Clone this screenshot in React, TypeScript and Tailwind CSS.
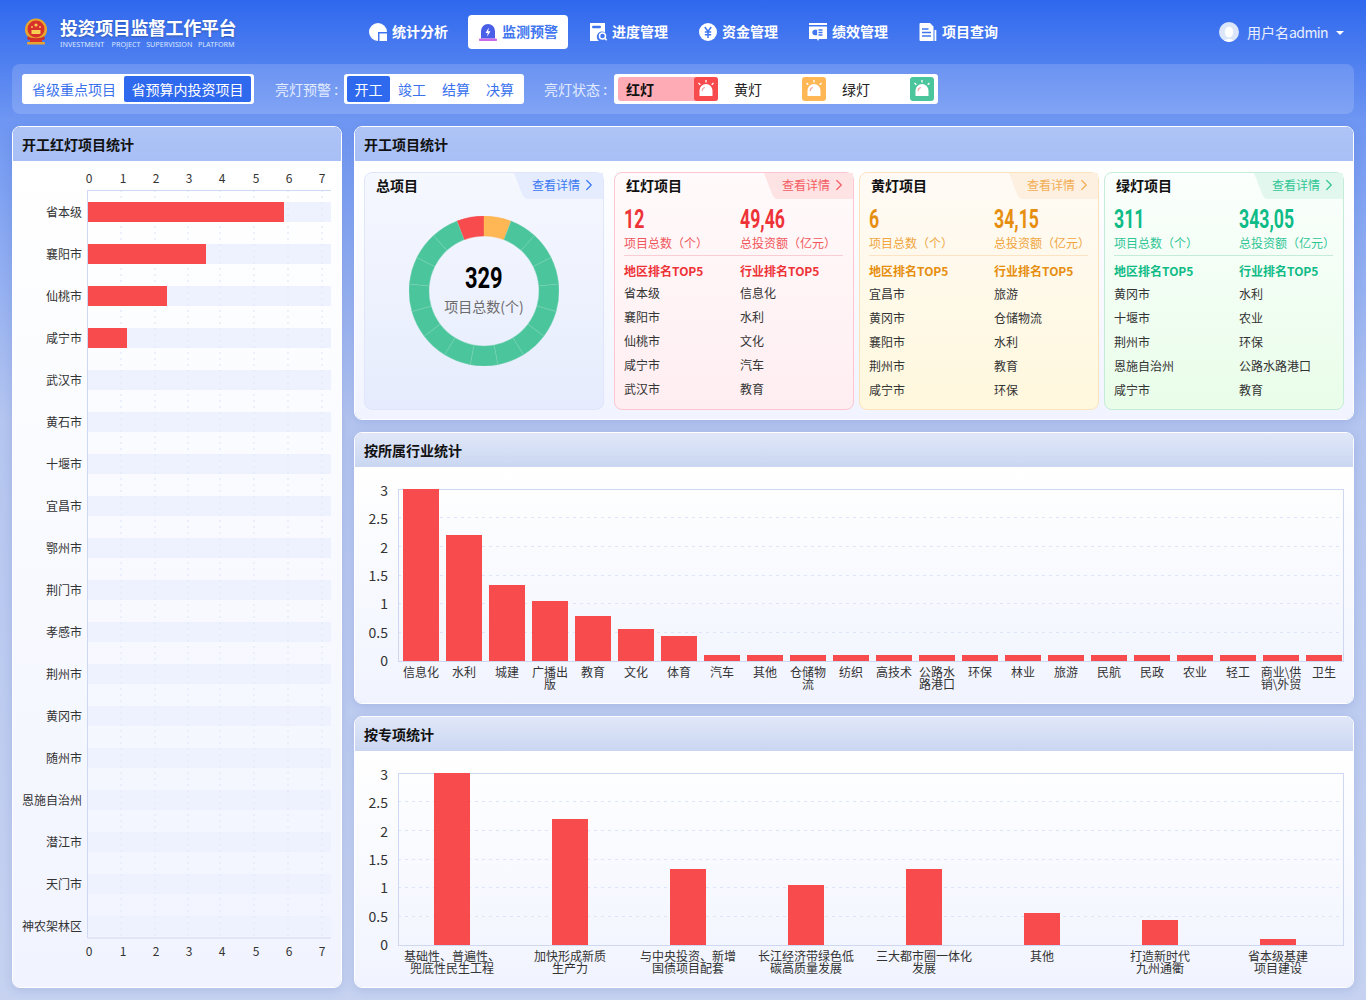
import { ChevronRight } from 'lucide-react';

const cjk = "font-['Noto_Sans_CJK_SC','Noto_Sans',sans-serif]";

const regions = [
  { name: '省本级', value: 197 },
  { name: '襄阳市', value: 119 },
  { name: '仙桃市', value: 80 },
  { name: '咸宁市', value: 40 },
  { name: '武汉市', value: 0 },
  { name: '黄石市', value: 0 },
  { name: '十堰市', value: 0 },
  { name: '宜昌市', value: 0 },
  { name: '鄂州市', value: 0 },
  { name: '荆门市', value: 0 },
  { name: '孝感市', value: 0 },
  { name: '荆州市', value: 0 },
  { name: '黄冈市', value: 0 },
  { name: '随州市', value: 0 },
  { name: '恩施自治州', value: 0 },
  { name: '潜江市', value: 0 },
  { name: '天门市', value: 0 },
  { name: '神农架林区', value: 0 },
];

const industries = [
  { top: 489, label: ['信息化'] },
  { top: 535, label: ['水利'] },
  { top: 585, label: ['城建'] },
  { top: 601, label: ['广播出', '版'] },
  { top: 616, label: ['教育'] },
  { top: 629, label: ['文化'] },
  { top: 636, label: ['体育'] },
  { top: 655, label: ['汽车'] },
  { top: 655, label: ['其他'] },
  { top: 655, label: ['仓储物', '流'] },
  { top: 655, label: ['纺织'] },
  { top: 655, label: ['高技术'] },
  { top: 655, label: ['公路水', '路港口'] },
  { top: 655, label: ['环保'] },
  { top: 655, label: ['林业'] },
  { top: 655, label: ['旅游'] },
  { top: 655, label: ['民航'] },
  { top: 655, label: ['民政'] },
  { top: 655, label: ['农业'] },
  { top: 655, label: ['轻工'] },
  { top: 655, label: ['商业\\供', '销\\外贸'] },
  { top: 655, label: ['卫生'] },
];

const specials = [
  { top: 773, label: ['基础性、普遍性、', '兜底性民生工程'] },
  { top: 819, label: ['加快形成新质', '生产力'] },
  { top: 869, label: ['与中央投资、新增', '国债项目配套'] },
  { top: 885, label: ['长江经济带绿色低', '碳高质量发展'] },
  { top: 869, label: ['三大都市圈一体化', '发展'] },
  { top: 913, label: ['其他'] },
  { top: 920, label: ['打造新时代', '九州通衢'] },
  { top: 939, label: ['省本级基建', '项目建设'] },
];

const ticks = ['3', '2.5', '2', '1.5', '1', '0.5', '0'];

function AlarmIcon({ color }: { color: string }) {
  return (
    <span className={`flex h-6 w-6 items-center justify-center rounded-[3px] ${color}`}>
      <svg width="20" height="20" viewBox="0 0 20 20" fill="none">
        <path d="M3.5 17V11.5a6.5 6.5 0 0 1 13 0V17z" fill="#fff" />
        <path d="M6.2 12a3.8 3.8 0 0 1 2.6-3.6" stroke="#f3a6a6" strokeWidth="1.2" />
        <path d="M10 1v2.5M2.5 4l1.8 1.8M17.5 4l-1.8 1.8" stroke="#fff" strokeWidth="1.3" />
      </svg>
    </span>
  );
}

function Emblem() {
  return (
    <svg width="28" height="30" viewBox="0 0 28 30">
      <circle cx="14" cy="12.5" r="11" fill="#e8a52d" />
      <circle cx="14" cy="12" r="8.5" fill="#d8302b" />
      <path d="M6 19c2 3 14 3 16 0l1 3c-3 2-15 2-18 0z" fill="#c6342a" />
      <rect x="8" y="22" width="12" height="5" rx="1" fill="#d8302b" />
      <rect x="5" y="25" width="18" height="2.5" rx="1" fill="#e8a52d" />
      <circle cx="14" cy="8" r="1.6" fill="#f7d154" />
      <circle cx="10" cy="10" r="0.9" fill="#f7d154" />
      <circle cx="18" cy="10" r="0.9" fill="#f7d154" />
      <rect x="9.5" y="13" width="9" height="4" fill="#f7d154" />
    </svg>
  );
}

const navItems = [
  {
    name: '统计分析',
    icon: (
      <svg width="20" height="20" viewBox="0 0 20 20" fill="#fff">
        <path d="M10 1A9 9 0 0 1 19 10H10V19A9 9 0 0 1 10 1Z" />
        <rect x="11.5" y="11.5" width="7.5" height="7.5" />
      </svg>
    ),
  },
  {
    name: '监测预警',
    active: true,
    icon: (
      <svg width="20" height="20" viewBox="0 0 20 20">
        <path d="M3 16.5V9a7 7 0 0 1 14 0v7.500z" fill="#4a5fe8" />
        <rect x="1" y="16.500" width="18" height="2.500" rx="0.800" fill="#c66ae8" />
        <path d="M10.800 5.500 7.500 11h2.200l-.6 3.500 3.400-5.300h-2.300z" fill="#fff" />
      </svg>
    ),
  },
  {
    name: '进度管理',
    icon: (
      <svg width="20" height="20" viewBox="0 0 20 20">
        <path d="M2 1h15v9.500a5 5 0 0 0-6 8.500H2z" fill="#fff" />
        <rect x="4" y="3.800" width="9" height="2.400" rx="1.200" fill="#3f76ef" />
        <circle cx="14.500" cy="14" r="3" fill="none" stroke="#fff" strokeWidth="1.500" />
        <path d="m16.700 16.200 2 2" stroke="#fff" strokeWidth="1.500" />
      </svg>
    ),
  },
  {
    name: '资金管理',
    icon: (
      <svg width="20" height="20" viewBox="0 0 20 20">
        <circle cx="10" cy="10" r="9" fill="#fff" />
        <path d="m6.800 5 3.200 4.500L13.200 5M6.800 10h6.400M6.800 12.800h6.400M10 9.500V16" stroke="#3f76ef" strokeWidth="1.500" fill="none" />
      </svg>
    ),
  },
  {
    name: '绩效管理',
    icon: (
      <svg width="20" height="20" viewBox="0 0 20 20">
        <rect x="1" y="1" width="18" height="2" fill="#fff" />
        <path d="M1 4.500h18v12.500h-8l-1 2-1-2H1z" fill="#fff" />
        <path d="M5 10.500a2 2 0 0 1 2-2h1.500v4H7a2 2 0 0 1-2-2zM10.500 8h4M10.500 10.500h4M10.500 13h4" stroke="#3f76ef" strokeWidth="1.300" fill="#3f76ef" />
      </svg>
    ),
  },
  {
    name: '项目查询',
    icon: (
      <svg width="20" height="20" viewBox="0 0 20 20">
        <path d="M1.500 2a1 1 0 0 1 1-1h9.500l3.500 3.500V19H2.500a1 1 0 0 1-1-1z" fill="#fff" />
        <rect x="16.500" y="8" width="1.800" height="11" fill="#fff" />
        <path d="M4 7h6.500M4 10.500h9M4 14h9" stroke="#3f76ef" strokeWidth="1.500" />
      </svg>
    ),
  },
];

function Header() {
  return (
    <header className="flex h-16 items-center">
      <div className="flex w-[358px] items-center pl-[22px]">
        <Emblem />
        <div className="ml-[10px]">
          <div className="text-[18px] leading-[24px] font-bold tracking-[-0.4px] text-white [text-shadow:0_1px_2px_rgba(0,0,0,0.25)]">
            投资项目监督工作平台
          </div>
          <div className="font-['Noto_Sans',sans-serif] text-[7.2px] leading-[10px] whitespace-pre text-[#dbe6ff]">
            INVESTMENT    PROJECT   SUPERVISION   PLATFORM
          </div>
        </div>
      </div>
      <nav className="flex gap-[10px]">
        {navItems.map((item) => (
          <div
            key={item.name}
            className={`flex h-[34px] w-[100px] items-center gap-1 rounded px-[10px] text-[14px] font-bold ${
              item.active ? 'bg-white text-[#3f76ef]' : 'text-white'
            }`}
          >
            {item.icon}
            <span className="pb-[2px] whitespace-nowrap">{item.name}</span>
          </div>
        ))}
      </nav>
      <div className="ml-auto flex items-center pr-[22px] text-[14px] text-[#eaf0ff]">
        <span className="flex h-5 w-5 items-end justify-center overflow-hidden rounded-full bg-[#dbe6fb]">
          <svg width="14" height="18" viewBox="0 0 14 18" fill="#fff">
            <ellipse cx="7" cy="8" rx="4.200" ry="5.500" />
            <path d="M1 18c1-4 11-4 12 0z" />
          </svg>
        </span>
        <span className="ml-2 leading-5">
          用户名<span className="tracking-[-0.6px]">admin</span>
        </span>
        <span className="mt-[2px] ml-2 h-0 w-0 border-x-4 border-t-4 border-x-transparent border-t-white" />
      </div>
    </header>
  );
}

function FilterBar() {
  return (
    <div className="mx-3 flex h-[50px] items-center rounded-lg bg-white/15 pl-[10px] text-[14px] leading-5">
      <div className="flex h-[30px] w-[232px] items-center rounded-[3px] bg-white p-[2px] text-[#3a72ee]">
        <span className="px-2">省级重点项目</span>
        <span className="flex h-[26px] w-[127px] items-center justify-center rounded-[2px] bg-[#2f69ee] text-white">
          省预算内投资项目
        </span>
      </div>
      <span className="ml-[21px] w-[69px] whitespace-nowrap text-[#e3ebff]">亮灯预警 :</span>
      <div className="flex h-[30px] w-[180px] items-center rounded-[3px] bg-white p-[2px] pl-[3px] text-[#3a72ee]">
        <span className="flex h-[26px] w-[43px] items-center justify-center rounded-[2px] bg-[#2f69ee] text-white">开工</span>
        <span className="ml-[8px]">竣工</span>
        <span className="ml-[16px]">结算</span>
        <span className="ml-[16px]">决算</span>
      </div>
      <span className="ml-[20px] w-[70px] whitespace-nowrap text-[#e3ebff]">亮灯状态 :</span>
      <div className="flex h-[30px] items-center gap-2 rounded-[3px] bg-white px-1 text-[#222]">
        <div className="flex h-6 w-[100px] items-center justify-between rounded-[3px] bg-[#ffabb6] pl-2 font-bold text-[#111]">
          红灯
          <AlarmIcon color="bg-[#f74b4d]" />
        </div>
        <div className="flex h-6 w-[100px] items-center justify-between pl-2">
          黄灯
          <AlarmIcon color="bg-[#ffb655]" />
        </div>
        <div className="flex h-6 w-[100px] items-center justify-between pl-2">
          绿灯
          <AlarmIcon color="bg-[#4bc59b]" />
        </div>
      </div>
    </div>
  );
}

function Panel({ title, headClass, children }: { title: string; headClass: string; children: React.ReactNode }) {
  return (
    <section className="flex h-full flex-col overflow-hidden rounded-lg border border-white shadow-[0_2px_10px_rgba(60,90,180,0.18)]">
      <h2 className={`flex h-[34px] shrink-0 items-center bg-gradient-to-b px-[9px] text-[14px] leading-5 font-bold text-[#111] ${headClass}`}>
        {title}
      </h2>
      <div className="min-h-0 flex-1 bg-gradient-to-b from-white to-[#f1f4ff]">{children}</div>
    </section>
  );
}

function RegionChart() {
  const xs = [89, 123, 156, 189, 222, 256, 289, 322];
  const grid = [121, 155, 188, 220, 254, 288, 322];
  return (
    <svg width="328" height="826" viewBox="13 161 328 826" className="block">
      {regions.map((r, i) => (
        <rect key={r.name} x="87" y={202 + i * 42} width="244" height="20" fill="#eef2fe" />
      ))}
      {grid.map((x) => (
        <line key={x} x1={x} x2={x} y1="190" y2="938" stroke="#e6ebfa" strokeWidth="1.500" strokeDasharray="2 4" />
      ))}
      {regions.map((r, i) => (
        <g key={r.name}>
          {r.value > 0 && <rect x="87" y={202 + i * 42} width={r.value} height="20" fill="#f74b4d" />}
          <text x="82" y={216.500 + i * 42} textAnchor="end" className="fill-[#333] text-[12px]">
            {r.name}
          </text>
        </g>
      ))}
      <path d="M331 190.500H87.500V938H331" fill="none" stroke="#ced8f2" />
      {xs.map((x, i) => (
        <g key={x}>
          <text x={x} y="183" textAnchor="middle" className="fill-[#333] text-[12px]">{i}</text>
          <text x={x} y="956" textAnchor="middle" className="fill-[#333] text-[12px]">{i}</text>
        </g>
      ))}
    </svg>
  );
}

function BarChart({
  items,
  top,
  firstX,
  step,
}: {
  items: { top: number; label: string[] }[];
  top: number;
  firstX: number;
  step: number;
}) {
  const bottom = top + 172;
  return (
    <svg width="998" height="236" viewBox={`355 ${top - 22} 998 236`} className="block">
      {ticks.map((t, i) => {
        const y = top + Math.floor((i * 172) / 6);
        return (
          <g key={t}>
            {i > 0 && i < 6 && <line x1="398" x2="1344" y1={y + 0.500} y2={y + 0.500} stroke="#dde5f8" strokeDasharray="3 4" />}
            <text x="388" y={top + 7 + i * 28.33} textAnchor="end" className="fill-[#333] text-[14px]">{t}</text>
          </g>
        );
      })}
      <rect x="398.500" y={top + 0.500} width="945" height="172" fill="none" stroke="#ced8f2" />
      {items.map((item, i) => {
        const x = firstX + i * step;
        return (
          <g key={item.label.join('')}>
            <rect x={x} y={item.top} width="36" height={bottom - item.top} fill="#f74b4d" />
            {item.label.map((line, j) => (
              <text key={line} x={x + 18} y={bottom + 16 + j * 12} textAnchor="middle" className="fill-[#333] text-[12px]">
                {line}
              </text>
            ))}
          </g>
        );
      })}
    </svg>
  );
}

function Donut() {
  const n = 17;
  const cx = 75;
  const cy = 75;
  const segs = Array.from({ length: n }, (_, i) => {
    const a0 = ((i - 1) * 2 * Math.PI) / n;
    const a1 = (i * 2 * Math.PI) / n;
    const p = (r: number, a: number) => `${cx + r * Math.sin(a)} ${cy - r * Math.cos(a)}`;
    const d = `M${p(75, a0)}A75 75 0 0 1 ${p(75, a1)}L${p(55, a1)}A55 55 0 0 0 ${p(55, a0)}Z`;
    const fill = i === 0 ? '#f74b4d' : i === 1 ? '#ffb655' : '#4bc59b';
    return <path key={i} d={d} fill={fill} stroke={i > 1 ? '#7fd4b5' : fill} strokeWidth="0.400" />;
  });
  return (
    <div className="relative mx-auto mt-[21px] h-[150px] w-[150px]">
      <svg width="150" height="150" viewBox="0 0 150 150">{segs}</svg>
      <div className="absolute inset-0 flex flex-col items-center pt-[47px]">
        <span className="inline-block scale-x-[.73] font-['Roboto',sans-serif] text-[30px] leading-[30px] font-bold text-black">329</span>
        <span className="mt-[3px] text-[14px] leading-5 text-[#6b6b6b]">项目总数(个)</span>
      </div>
    </div>
  );
}

function CardTab({ tabClass, linkClass }: { tabClass: string; linkClass: string }) {
  return (
    <div
      className={`absolute top-0 right-0 flex h-[26px] w-[89px] items-center justify-end pr-[5px] pb-[2px] text-[12px] [clip-path:path('M0_0H89V26H14Q10_26_8_21Z')] ${tabClass} ${linkClass}`}
    >
      查看详情
      <ChevronRight size={18} strokeWidth={1.600} />
    </div>
  );
}

type Theme = {
  card: string;
  tab: string;
  link: string;
  value: string;
  label: string;
  divider: string;
};

function LightCard({
  title,
  theme,
  count,
  amount,
  regionsTop,
  sectorsTop,
  columns,
  rowsTop,
}: {
  title: string;
  theme: Theme;
  count: string;
  amount: string;
  regionsTop: string[];
  sectorsTop: string[];
  columns: string;
  rowsTop: string;
}) {
  return (
    <div className={`relative h-[238px] w-[240px] shrink-0 rounded-lg border bg-gradient-to-b pr-[10px] pl-[9px] ${theme.card}`}>
      <CardTab tabClass={theme.tab} linkClass={theme.link} />
      <div className="mt-[2px] pl-[2px] text-[14px] leading-5 font-bold text-[#111]">{title}</div>
      <div className={`mt-[10px] grid ${columns} border-b pb-[3px] ${theme.divider}`}>
        <div>
          <div className={`inline-block origin-left scale-x-[.68] font-['Roboto',sans-serif] text-[26px] leading-[28px] font-bold whitespace-nowrap ${theme.value}`}>{count}</div>
          <div className={`mt-[1px] text-[12px] leading-[18px] whitespace-nowrap ${theme.label}`}>项目总数（个）</div>
        </div>
        <div>
          <div className={`inline-block origin-left scale-x-[.68] font-['Roboto',sans-serif] text-[26px] leading-[28px] font-bold whitespace-nowrap ${theme.value}`}>{amount}</div>
          <div className={`mt-[1px] text-[12px] leading-[18px] whitespace-nowrap ${theme.label}`}>总投资额（亿元）</div>
        </div>
      </div>
      <div className={`mt-[6px] grid ${columns} text-[12px] leading-[18px] font-bold ${theme.value}`}>
        <span>地区排名TOP5</span>
        <span>行业排名TOP5</span>
      </div>
      <div className={`${rowsTop} grid ${columns} text-[12px] leading-[24px] text-[#333]`}>
        {regionsTop.map((r, i) => (
          <div key={r} className="contents">
            <span>{r}</span>
            <span>{sectorsTop[i]}</span>
          </div>
        ))}
      </div>
    </div>
  );
}

const blueHead = 'from-[#aec4f7] to-[#a8bff5]';
const paleHead = 'from-[#e0e7f8] to-[#cad6f1]';

export default function App() {
  return (
    <div className={`h-[1000px] overflow-hidden bg-[linear-gradient(180deg,#2f68ee_0%,#6e96f2_12%,#b4c5ef_42%,#c6d2f0_100%)] ${cjk}`}>
      <Header />
      <FilterBar />
      <main className="mx-3 mt-3 flex gap-3">
        <div className="h-[862px] w-[330px] shrink-0">
          <Panel title="开工红灯项目统计" headClass={blueHead}>
            <RegionChart />
          </Panel>
        </div>
        <div className="flex w-[1000px] flex-col gap-3">
          <div className="h-[294px]">
            <Panel title="开工项目统计" headClass={blueHead}>
              <div className="flex pt-[11px] pl-[9px]">
                <div className="relative h-[238px] w-[240px] shrink-0 rounded-lg border border-[#dfe6fb] bg-gradient-to-b from-[#f6f8ff] to-[#e6ecfd] pl-[11px]">
                  <CardTab tabClass="bg-[#e5ecfd]" linkClass="text-[#3a78f0]" />
                  <div className="mt-[2px] text-[14px] leading-5 font-bold text-[#111]">总项目</div>
                  <div className="-ml-[11px]">
                    <Donut />
                  </div>
                </div>
                <div className="ml-[10px] flex gap-[5px]">
                  <LightCard
                    title="红灯项目"
                    count="12"
                    amount="49,46"
                    columns="grid-cols-[116px_104px]"
                    rowsTop="mt-[1px]"
                    regionsTop={['省本级', '襄阳市', '仙桃市', '咸宁市', '武汉市']}
                    sectorsTop={['信息化', '水利', '文化', '汽车', '教育']}
                    theme={{
                      card: 'border-[#fcc5d0] from-[#fffafb] to-[#ffeef1]',
                      tab: 'bg-[#fde3e3]',
                      link: 'text-[#f35d62]',
                      value: 'text-[#ee3338]',
                      label: 'text-[#f0565b]',
                      divider: 'border-[#f8cdd4]',
                    }}
                  />
                  <LightCard
                    title="黄灯项目"
                    count="6"
                    amount="34,15"
                    columns="grid-cols-[125px_95px]"
                    rowsTop="mt-[2px]"
                    regionsTop={['宜昌市', '黄冈市', '襄阳市', '荆州市', '咸宁市']}
                    sectorsTop={['旅游', '仓储物流', '水利', '教育', '环保']}
                    theme={{
                      card: 'border-[#fde3bd] from-[#fffaf5] to-[#fff8dd]',
                      tab: 'bg-[#fdf0e0]',
                      link: 'text-[#f3ad54]',
                      value: 'text-[#e68e0f]',
                      label: 'text-[#f0a540]',
                      divider: 'border-[#fbe3c4]',
                    }}
                  />
                  <LightCard
                    title="绿灯项目"
                    count="311"
                    amount="343,05"
                    columns="grid-cols-[125px_95px]"
                    rowsTop="mt-[2px]"
                    regionsTop={['黄冈市', '十堰市', '荆州市', '恩施自治州', '咸宁市']}
                    sectorsTop={['水利', '农业', '环保', '公路水路港口', '教育']}
                    theme={{
                      card: 'border-[#c5ecd8] from-[#fbfffd] to-[#e9fde9]',
                      tab: 'bg-[#e2f8ee]',
                      link: 'text-[#31c594]',
                      value: 'text-[#0fbb86]',
                      label: 'text-[#2fc596]',
                      divider: 'border-[#c5ecd8]',
                    }}
                  />
                </div>
              </div>
            </Panel>
          </div>
          <div className="h-[272px]">
            <Panel title="按所属行业统计" headClass={paleHead}>
              <BarChart items={industries} top={489} firstX={403} step={43} />
            </Panel>
          </div>
          <div className="h-[272px]">
            <Panel title="按专项统计" headClass={paleHead}>
              <BarChart items={specials} top={773} firstX={434} step={118} />
            </Panel>
          </div>
        </div>
      </main>
    </div>
  );
}
